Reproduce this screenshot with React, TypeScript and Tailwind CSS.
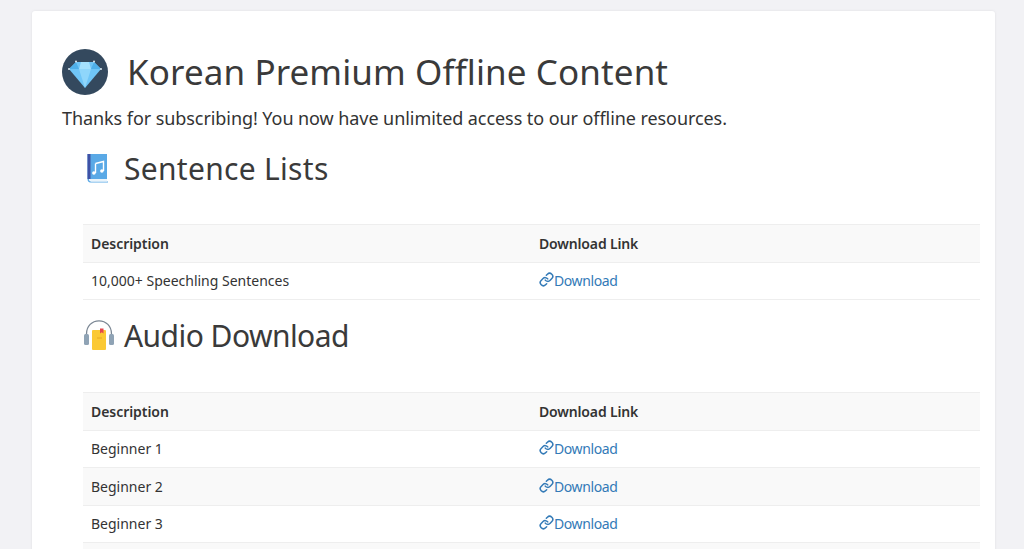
import { Link } from "lucide-react";

function Diamond() {
  return (
    <svg viewBox="0 0 46 46" className="h-[46px] w-[46px] shrink-0">
      <circle cx="23" cy="23" r="23" fill="#34495e" />
      <path d="M14 13h18l7 7-16 19L7 20z" fill="#6fc5f7" />
      <path d="M17 20h12l-6 19z" fill="#8fd6fb" />
      <path d="M14 13l3 7H7zM32 13l-3 7h10z" fill="#4fb0ea" />
      <path d="M19 13h8l2 7H17z" fill="#a5e0fc" />
      <circle cx="14" cy="12.500" r="1" fill="#dfe8ee" />
      <circle cx="32" cy="12.500" r="1" fill="#dfe8ee" />
      <circle cx="7" cy="20" r="1" fill="#dfe8ee" />
      <circle cx="39" cy="20" r="1" fill="#dfe8ee" />
    </svg>
  );
}

function MusicBook() {
  return (
    <svg viewBox="0 0 21 29" className="h-[29px] w-[21px] shrink-0">
      <path d="M0.500 0h19.500v25H0.500z" fill="#5aa9e6" />
      <path d="M0.500 0h3v25h-3z" fill="#3f51a5" />
      <path d="M0.500 25c0 2 1 3.500 3 3.500H21v-1H4c-1.500 0-2-1-2-2.500z" fill="#5aa9e6" />
      <path d="M2.500 25H20v2.500H4z" fill="#eaf4fb" />
      <path d="M8.500 9.500l8-2V17" fill="none" stroke="#fff" strokeWidth="1.4" />
      <path d="M8.500 9.500V19" fill="none" stroke="#fff" strokeWidth="1.4" />
      <circle cx="6.900" cy="19" r="1.800" fill="#fff" />
      <circle cx="14.900" cy="17" r="1.800" fill="#fff" />
    </svg>
  );
}

function Headphones() {
  return (
    <svg viewBox="0 0 32 31" className="h-[31px] w-[32px] shrink-0">
      <path d="M3.500 14C3.500 6 9 0.800 16 0.800S28.500 6 28.500 14" fill="none" stroke="#7b8794" strokeWidth="1.300" />
      <rect x="1" y="14" width="5" height="11" rx="1.500" fill="#8fa3b5" />
      <rect x="26" y="14" width="5" height="11" rx="1.500" fill="#8fa3b5" />
      <rect x="9" y="10" width="14" height="20" rx="1" fill="#fbc934" />
      <path d="M14 18h5" stroke="#e8a820" strokeWidth="1" />
      <path d="M17 8.500h3.500v5l-1.750-1.300-1.750 1.300z" fill="#e5484d" />
    </svg>
  );
}

function DownloadTable({ rows }: { rows: string[] }) {
  return (
    <table className="w-full table-fixed border-collapse text-[14px] text-[#333]">
      <thead>
        <tr className="bg-[#f9f9f9]">
          <th className="h-[37.5px] w-[448px] border-y border-[#eeeeee] px-2 text-left font-semibold tracking-[-0.05px]">Description</th>
          <th className="h-[37.5px] border-y border-[#eeeeee] px-2 text-left font-semibold tracking-[-0.15px]">Download Link</th>
        </tr>
      </thead>
      <tbody>
        {rows.map((row) => (
          <tr key={row} className="even:bg-[#f9f9f9]">
            <td className="h-[37.5px] border-b border-[#eeeeee] px-2">{row}</td>
            <td className="h-[37.5px] border-b border-[#eeeeee] px-2">
              <a href="#" className="flex items-center tracking-[-0.4px] text-[#337ab7]">
                <Link className="mb-[2px] h-[15px] w-[15px]" strokeWidth={2.4} />
                Download
              </a>
            </td>
          </tr>
        ))}
      </tbody>
    </table>
  );
}

export default function App() {
  return (
    <div className="h-[549px] overflow-hidden bg-[#f2f2f5] px-8 pt-[11px] font-['Noto_Sans',sans-serif] text-[#333]">
      <div className="h-[700px] w-[963px] rounded-[3px] bg-white pl-[30px] pr-[15px] shadow-[0_0_3px_rgba(0,0,0,0.08)]">
        <div className="flex items-center gap-[19px] pt-[37px]">
          <Diamond />
          <h1 className="text-[35px] leading-[48px] tracking-[0.1px] text-[#3a3a3a]">Korean Premium Offline Content</h1>
        </div>
        <p className="mt-[9px] text-[18px] leading-[26px] tracking-[-0.07px]">
          Thanks for subscribing! You now have unlimited access to our offline resources.
        </p>
        <div className="pl-[21px]">
          <div className="mt-[13px] flex h-[48px] items-center pl-[4px]">
            <MusicBook />
            <h2 className="ml-[16px] text-[30px] tracking-[0.3px] text-[#3a3a3a]">Sentence Lists</h2>
          </div>
          <div className="mt-[32px]">
            <DownloadTable rows={["10,000+ Speechling Sentences"]} />
          </div>
          <div className="mt-[11px] flex h-[48px] items-center">
            <Headphones />
            <h2 className="ml-[9px] text-[30px] tracking-[-0.55px] text-[#3a3a3a]">Audio Download</h2>
          </div>
          <div className="mt-[33px]">
            <DownloadTable rows={["Beginner 1", "Beginner 2", "Beginner 3", "Beginner 4"]} />
          </div>
        </div>
      </div>
    </div>
  );
}
